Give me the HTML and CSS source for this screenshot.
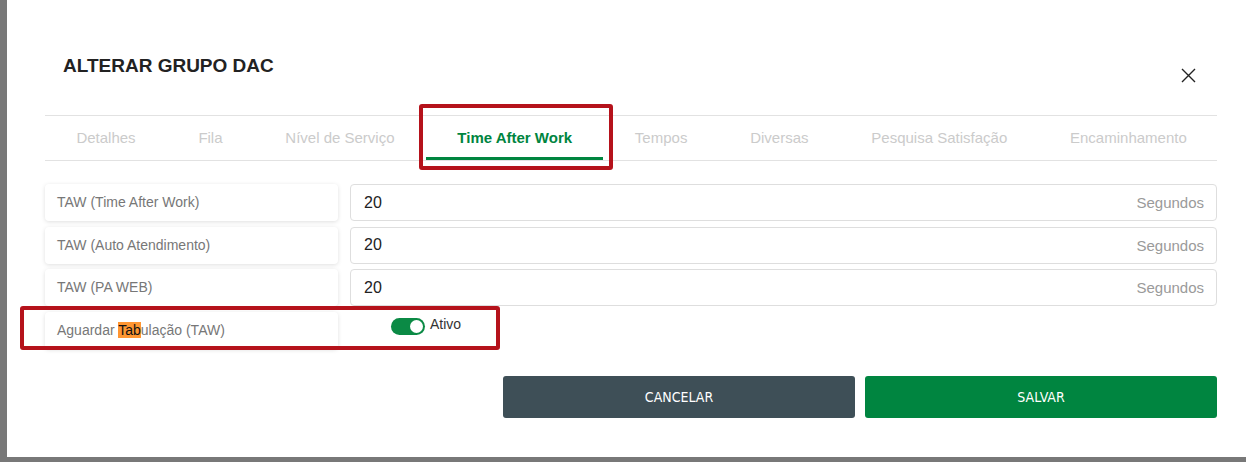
FILE: index.html
```html
<!DOCTYPE html>
<html>
<head>
  <meta charset="UTF-8">
  <title>Alterar Grupo DAC</title>
  <link rel="stylesheet" href="styles.css">
</head>
<body>

<div class="modal">
  <div class="modal-header">
    <h2 class="modal-title">ALTERAR GRUPO DAC</h2>
    <button class="close-btn" aria-label="Fechar">
      <svg width="15" height="15" viewBox="0 0 15 15"><path d="M1 1L14 14M14 1L1 14" stroke="#222" stroke-width="1.4" fill="none"/></svg>
    </button>
  </div>

  <ul class="tabs">
    <li>Detalhes</li>
    <li>Fila</li>
    <li>Nível de Serviço</li>
    <li class="active">Time After Work</li>
    <li>Tempos</li>
    <li>Diversas</li>
    <li>Pesquisa Satisfação</li>
    <li>Encaminhamento</li>
  </ul>

  <div class="form">
    <div class="form-row">
      <div class="field-label">TAW (Time After Work)</div>
      <div class="field-input"><span class="value">20</span><span class="unit">Segundos</span></div>
    </div>
    <div class="form-row">
      <div class="field-label">TAW (Auto Atendimento)</div>
      <div class="field-input"><span class="value">20</span><span class="unit">Segundos</span></div>
    </div>
    <div class="form-row">
      <div class="field-label">TAW (PA WEB)</div>
      <div class="field-input"><span class="value">20</span><span class="unit">Segundos</span></div>
    </div>
    <div class="form-row">
      <div class="field-label">Aguardar <mark class="find-hit">Tab</mark>ulação (TAW)</div>
      <div class="field-toggle">
        <span class="switch on"><span class="knob"></span></span>
        <span class="switch-text">Ativo</span>
      </div>
    </div>
  </div>

  <div class="actions">
    <button class="btn btn-cancel">CANCELAR</button>
    <button class="btn btn-save">SALVAR</button>
  </div>

  <!-- marcações em vermelho -->
  <div class="mark-box mark-tab"></div>
  <div class="mark-box mark-row"></div>
</div>

</body>
</html>
```

FILE: styles.css
```css
html, body {
  margin: 0;
  height: 100%;
}
body {
  background-color: #787878;
  font-family: "Liberation Sans", Arial, sans-serif;
  overflow: hidden;
}
.modal {
  position: relative;
  margin-left: 7px;
  height: 457px;
  background: white;
  padding: 0 29px 0 38px;
  box-sizing: border-box;
}
.modal-header {
  display: flex;
  justify-content: space-between;
  align-items: flex-start;
  padding: 55px 21px 0 18px;
  height: 115px;
  box-sizing: border-box;
}
.modal-title {
  margin: 0;
  font-size: 19px;
  font-weight: bold;
  color: #222;
  line-height: 22px;
}
.close-btn {
  margin-top: 13px;
  padding: 0;
  background: none;
  border: none;
  cursor: pointer;
  width: 15px;
  height: 15px;
}
.tabs {
  display: flex;
  margin: 0;
  padding: 0;
  list-style: none;
  border-top: 1px solid #e2e2e2;
  border-bottom: 1px solid #e2e2e2;
  height: 46px;
  box-sizing: border-box;
}
.tabs li {
  padding: 1px 31.4px 0;
  font-size: 15px;
  line-height: 41px;
  color: #cbcbcb;
  white-space: nowrap;
  border-bottom: 3px solid transparent;
}
.tabs li.active {
  color: #00853f;
  font-weight: bold;
  border-bottom-color: #00853f;
}
.form {
  display: flex;
  flex-direction: column;
  gap: 5.5px;
  padding-top: 23px;
}
.form-row {
  display: flex;
  gap: 12px;
  height: 37px;
}
.field-label {
  width: 293px;
  flex: none;
  box-sizing: border-box;
  padding-left: 12px;
  font-size: 14px;
  line-height: 37px;
  color: #777;
  background: white;
  border-radius: 4px;
  box-shadow: 0 1px 4px rgba(0, 0, 0, 0.13);
}
.find-hit {
  background: #ff9632;
  color: #111;
}
.field-input {
  flex: 1;
  display: flex;
  justify-content: space-between;
  align-items: center;
  padding: 0 12px 0 13px;
  border: 1px solid #dedede;
  border-radius: 4px;
}
.value {
  font-size: 16px;
  color: #222;
}
.unit {
  font-size: 15px;
  color: #9a9a9a;
}
.field-toggle {
  display: flex;
  align-items: flex-start;
  gap: 5px;
  padding: 5px 0 0 41px;
}
.switch {
  position: relative;
  display: inline-block;
  width: 34px;
  height: 17px;
  margin-top: 1px;
  border-radius: 9px;
  background: #0b8a45;
}
.knob {
  position: absolute;
  top: 2px;
  right: 2px;
  width: 13px;
  height: 13px;
  border-radius: 50%;
  background: white;
}
.switch-text {
  font-size: 14px;
  color: #333;
  line-height: 14px;
}
.actions {
  display: flex;
  justify-content: flex-end;
  gap: 10px;
  padding-top: 27px;
}
.btn {
  width: 352px;
  height: 42px;
  border: none;
  border-radius: 3px;
  color: white;
  font-family: "Liberation Sans Narrow", "DejaVu Sans Condensed", sans-serif;
  font-size: 14px;
  cursor: pointer;
}
.btn-cancel {
  background: #3e4f57;
}
.btn-save {
  background: #008540;
}
.mark-box {
  position: absolute;
  border: 4px solid #b5121b;
  border-radius: 3px;
  box-sizing: border-box;
  pointer-events: none;
}
.mark-tab {
  left: 412px;
  top: 104px;
  width: 194px;
  height: 66px;
}
.mark-row {
  left: 13px;
  top: 306px;
  width: 480px;
  height: 44px;
}
```
